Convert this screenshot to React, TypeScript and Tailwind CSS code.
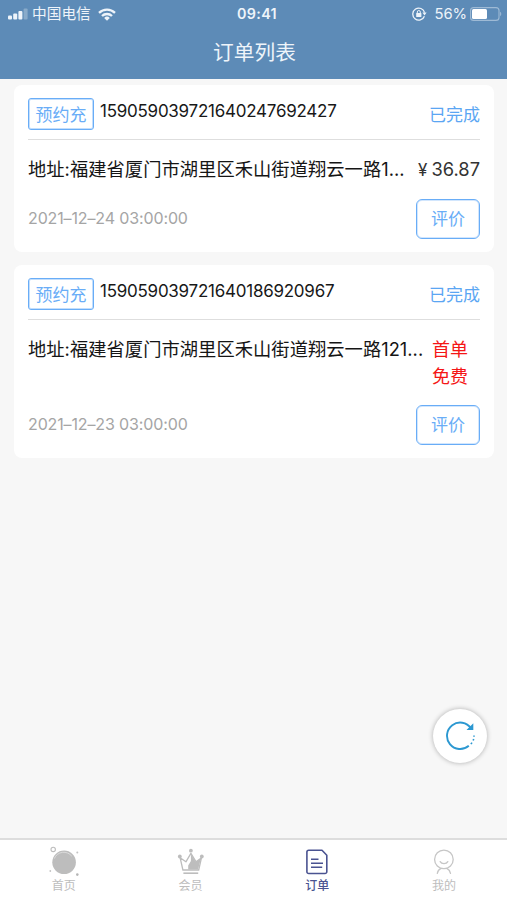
import type { ReactNode } from 'react'

interface Order {
  id: string
  address: string
  price: string
  free?: boolean
  time: string
}

const orders: Order[] = [
  {
    id: '159059039721640247692427',
    address: '地址:福建省厦门市湖里区禾山街道翔云一路1...',
    price: '36.87',
    time: '2021–12–24 03:00:00',
  },
  {
    id: '159059039721640186920967',
    address: '地址:福建省厦门市湖里区禾山街道翔云一路121...',
    price: '0',
    free: true,
    time: '2021–12–23 03:00:00',
  },
]

function StatusBar() {
  return (
    <div className="grid h-7 grid-cols-3 items-center pl-2 pr-[5px] text-[#eef4fa]">
      <div className="flex items-center">
        <svg width="20" height="12" viewBox="0 0 20 12" fill="currentColor">
          <rect x="0" y="7.5" width="4" height="4" rx="1" />
          <rect x="5.2" y="5.5" width="4" height="6" rx="1" />
          <rect x="10.4" y="3" width="4" height="8.5" rx="1" />
          <rect x="15.6" y="0.5" width="4" height="11" rx="1" opacity="0.3" />
        </svg>
        <span className="ml-1 whitespace-nowrap text-[14.7px] leading-7">中国电信</span>
        <svg className="ml-[7px]" width="18" height="13" viewBox="0 0 18 13" fill="none" stroke="currentColor" strokeWidth="2.3">
          <path d="M1 4.8a11.5 11.5 0 0 1 16 0" />
          <path d="M4 8a7.2 7.2 0 0 1 10 0" />
          <path d="M9 12.7 6.2 9.9a4 4 0 0 1 5.6 0Z" fill="currentColor" stroke="none" />
        </svg>
      </div>
      <span className="pl-1 text-center text-[14.3px] font-semibold leading-7 tracking-[0.3px]">09:41</span>
      <div className="flex items-center justify-end">
        <svg width="15" height="14" viewBox="0 0 15 14" fill="none" stroke="currentColor">
          <path d="M12.4 9.2a6 6 0 1 1 .2-3.6" strokeWidth="1.3" />
          <path d="M10.4 5.6h4.2l-2.1 2.8Z" fill="currentColor" stroke="none" />
          <rect x="4.2" y="6.1" width="5.2" height="4" rx="0.5" fill="currentColor" stroke="none" />
          <path d="M5.3 6.3V5a1.5 1.5 0 0 1 3 0v1.3" strokeWidth="1" />
        </svg>
        <span className="ml-2 text-[14.8px] leading-7 tracking-[-0.1px]">56%</span>
        <svg className="ml-[3px]" width="32" height="14" viewBox="0 0 32 14">
          <rect x="0.6" y="0.6" width="28.4" height="12.8" rx="3" fill="none" stroke="currentColor" strokeOpacity="0.45" strokeWidth="1.1" />
          <rect x="2" y="2" width="15" height="10" rx="1.5" fill="#fff" />
          <path d="M30.2 4.8c1.4.6 1.4 3.8 0 4.4Z" fill="currentColor" opacity="0.5" />
        </svg>
      </div>
    </div>
  )
}

function OrderCard({ order }: { order: Order }) {
  return (
    <div className="rounded-lg bg-white px-3.5 pb-[13px] pt-[13px]">
      <div className="flex h-[42px] items-start border-b border-[#dedede]">
        <span className="flex h-8 w-[66px] shrink-0 items-center justify-center rounded-[3px] border border-[#69adf7] pt-[3px] text-[17px] text-[#69adf7] shadow-[inset_0_0_0_1px_rgba(105,173,247,0.4)]">
          预约充
        </span>
        <span className="ml-1.5 text-[17px] leading-[26px] tracking-[-0.25px] text-[#181818]">{order.id}</span>
        <span className="ml-auto pt-px text-[17px] leading-8 text-[#5ba6f3]">已完成</span>
      </div>

      <div className="flex justify-between pt-4 text-[18.3px] leading-[27px]">
        <p className="shrink-0 whitespace-nowrap tracking-[0.03px] text-[#151515]">{order.address}</p>
        {order.free ? (
          <p className="w-12 text-[18px] text-[#f51616]">首单<br />免费</p>
        ) : (
          <p className="whitespace-nowrap text-[#333]">
            <span className="mr-1 text-[17px]">¥</span>{order.price}
          </p>
        )}
      </div>

      <div className="mt-[15px] flex items-center justify-between">
        <span className="pb-0.5 text-[16px] tracking-[-0.13px] text-[#a5a5a5]">{order.time}</span>
        <button className="h-10 w-16 rounded-md border border-[#69adf7] pt-px text-[17px] text-[#69adf7] shadow-[inset_0_0_0_1px_rgba(105,173,247,0.3)]">
          评价
        </button>
      </div>
    </div>
  )
}

function HomeIcon() {
  return (
    <svg width="32" height="32" viewBox="0 0 32 32">
      <circle cx="16.1" cy="16.3" r="11.8" fill="#bdbdbd" />
      <path d="M6.3 12.6a10.2 10.2 0 0 1 17.5-2.4" fill="none" stroke="#dedede" strokeWidth="0.9" />
      <circle cx="5.2" cy="3.4" r="2.2" fill="#fff" stroke="#bdbdbd" strokeWidth="1.1" />
      <circle cx="29.3" cy="6.5" r="1" fill="#c4c4c4" />
      <circle cx="2.3" cy="25" r="0.9" fill="#c4c4c4" />
      <circle cx="29.3" cy="28.6" r="1.3" fill="#b5b5b5" />
    </svg>
  )
}

function CrownIcon() {
  return (
    <svg width="28" height="28" viewBox="0.6 -0.4 28 28" fill="none" stroke="#bdbdbd" strokeWidth="1.3" strokeLinejoin="round">
      <path d="M3.7 9.3 6.5 21.6h15.8l2.8-12.3-5.4 4.1-5.2-8.4-5 8.4Z" />
      <path d="M14.5 5.6 19.5 13.6l5-3.4-2.8 10.8h-9.9V17l2.7-4.4Z" fill="#bdbdbd" stroke="none" />
      <path d="M7 24.8h14.8" strokeWidth="1.6" />
      <g fill="#bdbdbd" stroke="none">
        <circle cx="14.5" cy="2.3" r="1.9" />
        <circle cx="3.4" cy="8.1" r="1.9" />
        <circle cx="25.4" cy="8.1" r="1.9" />
      </g>
    </svg>
  )
}

function OrdersIcon() {
  return (
    <svg width="28" height="28" viewBox="0 0 28 28" fill="none" stroke="#4a5391" strokeWidth="1.6" strokeLinejoin="round">
      <path d="M5.7 2.3h13.3l4.8 4.9v16.5a1.8 1.8 0 0 1-1.8 1.8H5.7a1.8 1.8 0 0 1-1.8-1.8V4.1a1.8 1.8 0 0 1 1.8-1.8Z" />
      <path d="M8 11.2h7.5M8 15.3h12M8 19.3h11.2" strokeWidth="1.5" />
    </svg>
  )
}

function MeIcon() {
  return (
    <svg width="28" height="28" viewBox="0 0 28 28" fill="none" stroke="#c6c6c6" strokeWidth="1.3" strokeLinecap="round">
      <circle cx="13.9" cy="11.4" r="9.3" />
      <path d="M10.2 13.6c1.4 2.6 6.2 2.6 7.6 0" />
      <path d="M11 20.4c-2 .9-3.2 2.6-3.7 5M16.8 20.4c2 .9 3.2 2.6 3.7 5" />
    </svg>
  )
}

const tabs: { label: string; icon: ReactNode; active?: boolean }[] = [
  { label: '首页', icon: <HomeIcon /> },
  { label: '会员', icon: <CrownIcon /> },
  { label: '订单', icon: <OrdersIcon />, active: true },
  { label: '我的', icon: <MeIcon /> },
]

export default function App() {
  return (
    <div className="relative flex h-[900px] w-[507px] flex-col overflow-hidden bg-[#f7f7f7] font-['Inter','Noto_Sans_CJK_SC',sans-serif]">
      <header className="h-[79px] shrink-0 bg-[#5d8bb7]">
        <StatusBar />
        <h1 className="pl-0.5 pt-px text-center text-[20.7px] leading-[48px] text-[#eef4fa]">订单列表</h1>
      </header>

      <main className="flex flex-1 flex-col gap-[13px] pl-3.5 pr-[13px] pt-1.5">
        {orders.map(o => <OrderCard key={o.id} order={o} />)}
      </main>

      {/* Floating refresh */}
      <button className="absolute left-[433px] top-[709px] flex h-[54px] w-[54px] items-center justify-center rounded-full bg-white shadow-[0_0_5px_rgba(0,0,0,0.3)]">
        <svg width="30" height="30" viewBox="0 0 30 30" fill="none" stroke="#2c98d1" strokeWidth="1.9">
          <path d="M26 7.2A13.2 13.2 0 1 0 23.8 24.8" />
          <path d="M28.3 2.3v6.6h-6.8Z" fill="#2c98d1" stroke="none" />
          <path d="M25.9 23.1 27 21.6M28.2 19.6l.5-1.6M29 15.8v-1.4" strokeWidth="1.6" />
        </svg>
      </button>

      <nav className="grid h-[62px] shrink-0 grid-cols-4 border-t-2 border-[#dddddd] bg-white">
        {tabs.map(t => (
          <div key={t.label} className="flex flex-col items-center pl-px pt-1.5">
            <div className="flex h-8 items-center justify-center">{t.icon}</div>
            <span className={`pt-px text-[12px] leading-[14px] ${t.active ? 'font-medium text-[#4a5391]' : 'text-[#bdbdbd]'}`}>
              {t.label}
            </span>
          </div>
        ))}
      </nav>
    </div>
  )
}
